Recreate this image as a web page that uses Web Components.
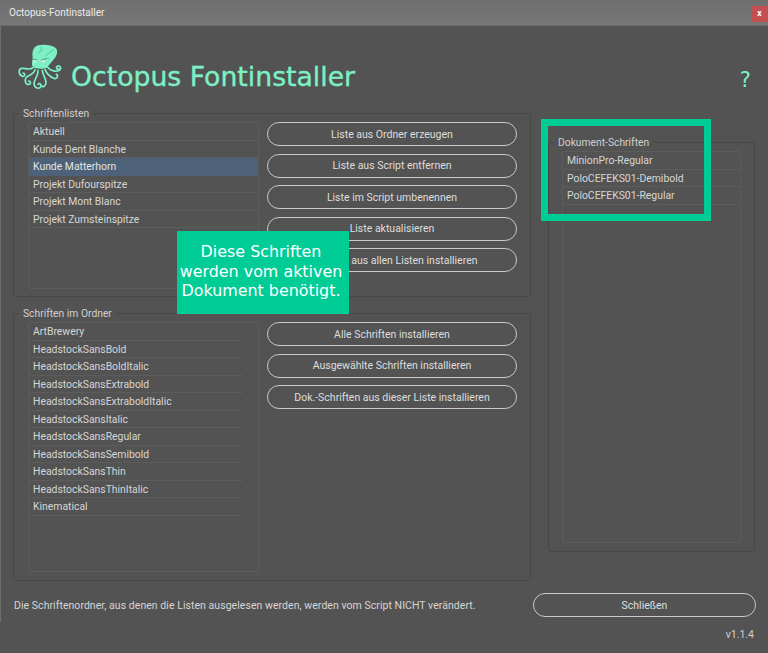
<!DOCTYPE html>
<html lang="de"><head><meta charset="utf-8"><title>Octopus-Fontinstaller</title>
<style>
html,body{margin:0;padding:0;background:#535353}
body{width:768px;height:653px;overflow:hidden;font-family:Roboto,"Noto Sans",sans-serif;font-size:10.5px;color:#d8d8d8}
</style></head><body>
<template id="t-list"><style>
:host{display:block;box-sizing:border-box;border:1px solid #5c5c5c;border-radius:2px;overflow:hidden}
</style><slot></slot></template>
<template id="t-row"><style>
:host{display:block;box-sizing:border-box;height:17.5px;line-height:18px;padding-left:4px;border-bottom:1px solid #5c5c5c;color:#d6d6d6;font-size:10.4px;white-space:nowrap}
:host([selected]){background:#4d6278;border-bottom-color:#4d6278;color:#e4e4e4}
</style><slot></slot></template>
<template id="t-btn"><style>
:host{display:flex;align-items:center;justify-content:center;box-sizing:border-box;height:24px;border:1px solid #c9c9c9;border-radius:12px;color:#dedede;font-size:10.5px;white-space:nowrap}
</style><slot></slot></template>
<template id="t-group"><style>
:host{display:block;box-sizing:border-box;position:relative;border:1px solid #474747;border-radius:3px}
.l{position:absolute;left:5px;top:-7px;background:#535353;padding:0 4px;line-height:13px;color:#d0d0d0;font-size:10.3px;white-space:nowrap}
</style><span class="l"><slot name="label"></slot></span><slot></slot></template>
<template id="t-titlebar"><style>
:host{display:flex;align-items:center;justify-content:space-between;box-sizing:border-box;height:26px;padding:0 1px 0 9px;background:linear-gradient(#6e6e6e,#787878);border-bottom:1px solid #6a6a6a;color:#ececec;font-size:10px}
.x{display:flex;align-items:center;justify-content:center;width:15px;height:16px;margin-top:2px;background:#c34f50;color:#fff;font-size:8.5px;font-weight:700;line-height:1}
</style><span><slot></slot></span><span class="x">x</span></template>
<template id="t-header"><style>
:host{display:flex;align-items:flex-start;box-sizing:border-box;height:87px;padding-left:16px;color:#7df0c6;position:relative}
svg{flex:none;display:block;margin-top:16px}
.t{font-family:"DejaVu Sans",sans-serif;font-size:26.7px;line-height:32px;margin:35px 0 0 7px;white-space:nowrap;-webkit-text-stroke:.35px #7df0c6}
.q{margin-left:auto;margin-right:17px;margin-top:42px;font-family:"DejaVu Sans",sans-serif;font-size:21px;line-height:24px}
</style>
<svg width="48" height="51" viewBox="18 21 144 153">
<path d="M84 31C100 27 125 29 136 38 146 47 141 62 132 72 124 82 116 92 110 98 100 102 78 103 70 96 62 88 68 78 68 68 66 52 68 37 84 31Z" fill="#7df0c6"/>
<path d="M131 43l-24 19M93 36l2 11-10 6M118 70l-15 2" fill="none" stroke="#4fb596" stroke-width="2.400"/>
<circle cx="75" cy="78" r="5" fill="#d8e8e0"/><circle cx="100" cy="78" r="5" fill="#d8e8e0"/>
<path d="M68 72l13 3M94 75l13-4" stroke="#3f7f6c" stroke-width="2.400"/>
<g fill="none" stroke="#7df0c6" stroke-width="5" stroke-linecap="round">
<path d="M70 97C58 108 44 98 34 100 24 103 26 122 38 124 46 124 46 114 39 114"/>
<path d="M75 104C72 118 58 120 50 126 42 134 46 150 57 148 64 146 62 137 56 138"/>
<path d="M84 106C86 122 72 132 72 146 73 160 88 164 93 154 95 148 88 143 84 148"/>
<path d="M97 106C98 120 108 130 108 142 108 154 98 158 94 152"/>
<path d="M105 103C110 116 122 126 132 130 142 133 146 122 139 118"/>
<path d="M112 96C122 108 138 112 148 106 156 100 150 90 142 94 137 97 140 104 146 102"/>
</g></svg>
<span class="t"><slot></slot></span><span class="q">?</span></template>
<template id="t-app"><style>
:host{display:block;width:768px;height:653px;position:relative;box-sizing:border-box}
.edge{position:absolute;left:0;top:26px;width:1px;height:596px;background:#6f6f6f}
</style><span class="edge"></span><slot></slot></template>
<template id="t-callout"><style>
:host{display:flex;align-items:center;justify-content:center;box-sizing:border-box;position:absolute;left:177px;top:231px;width:172px;height:83px;padding:0 4px 2px 0;background:#00cc96;color:#fff;font-family:"DejaVu Sans",sans-serif;font-size:15.900px;line-height:19.500px;text-align:center}
</style><span><slot></slot></span></template>
<template id="t-frame"><style>
:host{display:block;box-sizing:border-box;position:absolute;left:541px;top:119px;width:170px;height:102px;border:7px solid #00cc96}
</style></template>
<octo-app>
<octo-titlebar>Octopus-Fontinstaller</octo-titlebar>
<octo-header>Octopus Fontinstaller</octo-header>
<div style="display:grid;grid-template-columns:518px 207px;column-gap:17px;padding-left:13px;height:469px">
 <div style="display:flex;flex-direction:column;gap:16px;padding-top:0">
  <octo-group style="height:184px;padding:8px 13px 7px 14px;display:flex">
   <span slot="label">Schriftenlisten</span>
   <div style="display:grid;grid-template-columns:231px 250px;column-gap:8px;height:167px">
    <octo-list>
     <octo-row>Aktuell</octo-row><octo-row>Kunde Dent Blanche</octo-row><octo-row selected>Kunde Matterhorn</octo-row><octo-row>Projekt Dufourspitze</octo-row><octo-row>Projekt Mont Blanc</octo-row><octo-row>Projekt Zumsteinspitze</octo-row>
    </octo-list>
    <div style="display:flex;flex-direction:column;gap:7.600px">
     <octo-btn>Liste aus Ordner erzeugen</octo-btn><octo-btn>Liste aus Script entfernen</octo-btn><octo-btn>Liste im Script umbenennen</octo-btn><octo-btn>Liste aktualisieren</octo-btn><octo-btn>Schriften aus allen Listen installieren</octo-btn>
    </div>
   </div>
  </octo-group>
  <octo-group style="height:268px;padding:8px 13px 9px 14px">
   <span slot="label">Schriften im Ordner</span>
   <div style="display:grid;grid-template-columns:231px 250px;column-gap:8px;height:250px">
    <octo-list style="padding-right:15px">
     <octo-row>ArtBrewery</octo-row><octo-row>HeadstockSansBold</octo-row><octo-row>HeadstockSansBoldItalic</octo-row><octo-row>HeadstockSansExtrabold</octo-row><octo-row>HeadstockSansExtraboldItalic</octo-row><octo-row>HeadstockSansItalic</octo-row><octo-row>HeadstockSansRegular</octo-row><octo-row>HeadstockSansSemibold</octo-row><octo-row>HeadstockSansThin</octo-row><octo-row>HeadstockSansThinItalic</octo-row><octo-row>Kinematical</octo-row>
    </octo-list>
    <div style="display:flex;flex-direction:column;gap:7.600px">
     <octo-btn>Alle Schriften installieren</octo-btn><octo-btn>Ausgewählte Schriften installieren</octo-btn><octo-btn>Dok.-Schriften aus dieser Liste installieren</octo-btn>
    </div>
   </div>
  </octo-group>
 </div>
 <div style="padding-top:29px">
  <octo-group style="height:410px;padding:8px 13px 8px 13px">
   <span slot="label">Dokument-Schriften</span>
   <octo-list style="height:392px;">
    <octo-row>MinionPro-Regular</octo-row><octo-row>PoloCEFEKS01-Demibold</octo-row><octo-row>PoloCEFEKS01-Regular</octo-row>
   </octo-list>
  </octo-group>
 </div>
</div>
<div style="display:flex;align-items:center;justify-content:space-between;padding:11px 12px 0 14px;height:24px">
 <span style="color:#d6d6d6;letter-spacing:.05px">Die Schriftenordner, aus denen die Listen ausgelesen werden, werden vom Script NICHT verändert.</span>
 <octo-btn style="width:223px">Schließen</octo-btn>
</div>
<div style="text-align:right;padding:11px 14px 0 0;color:#d0d0d0;line-height:14px">v1.1.4</div>
<octo-frame></octo-frame>
<octo-callout>Diese Schriften<br>werden vom aktiven<br>Dokument benötigt.</octo-callout>
</octo-app>
<script>
const defs={'octo-app':'t-app','octo-titlebar':'t-titlebar','octo-header':'t-header','octo-group':'t-group','octo-list':'t-list','octo-row':'t-row','octo-btn':'t-btn','octo-callout':'t-callout','octo-frame':'t-frame'};
for(const [n,t] of Object.entries(defs)){
 customElements.define(n,class extends HTMLElement{constructor(){super();this.attachShadow({mode:'open'}).appendChild(document.getElementById(t).content.cloneNode(true));}});
}
</script>
</body></html>
